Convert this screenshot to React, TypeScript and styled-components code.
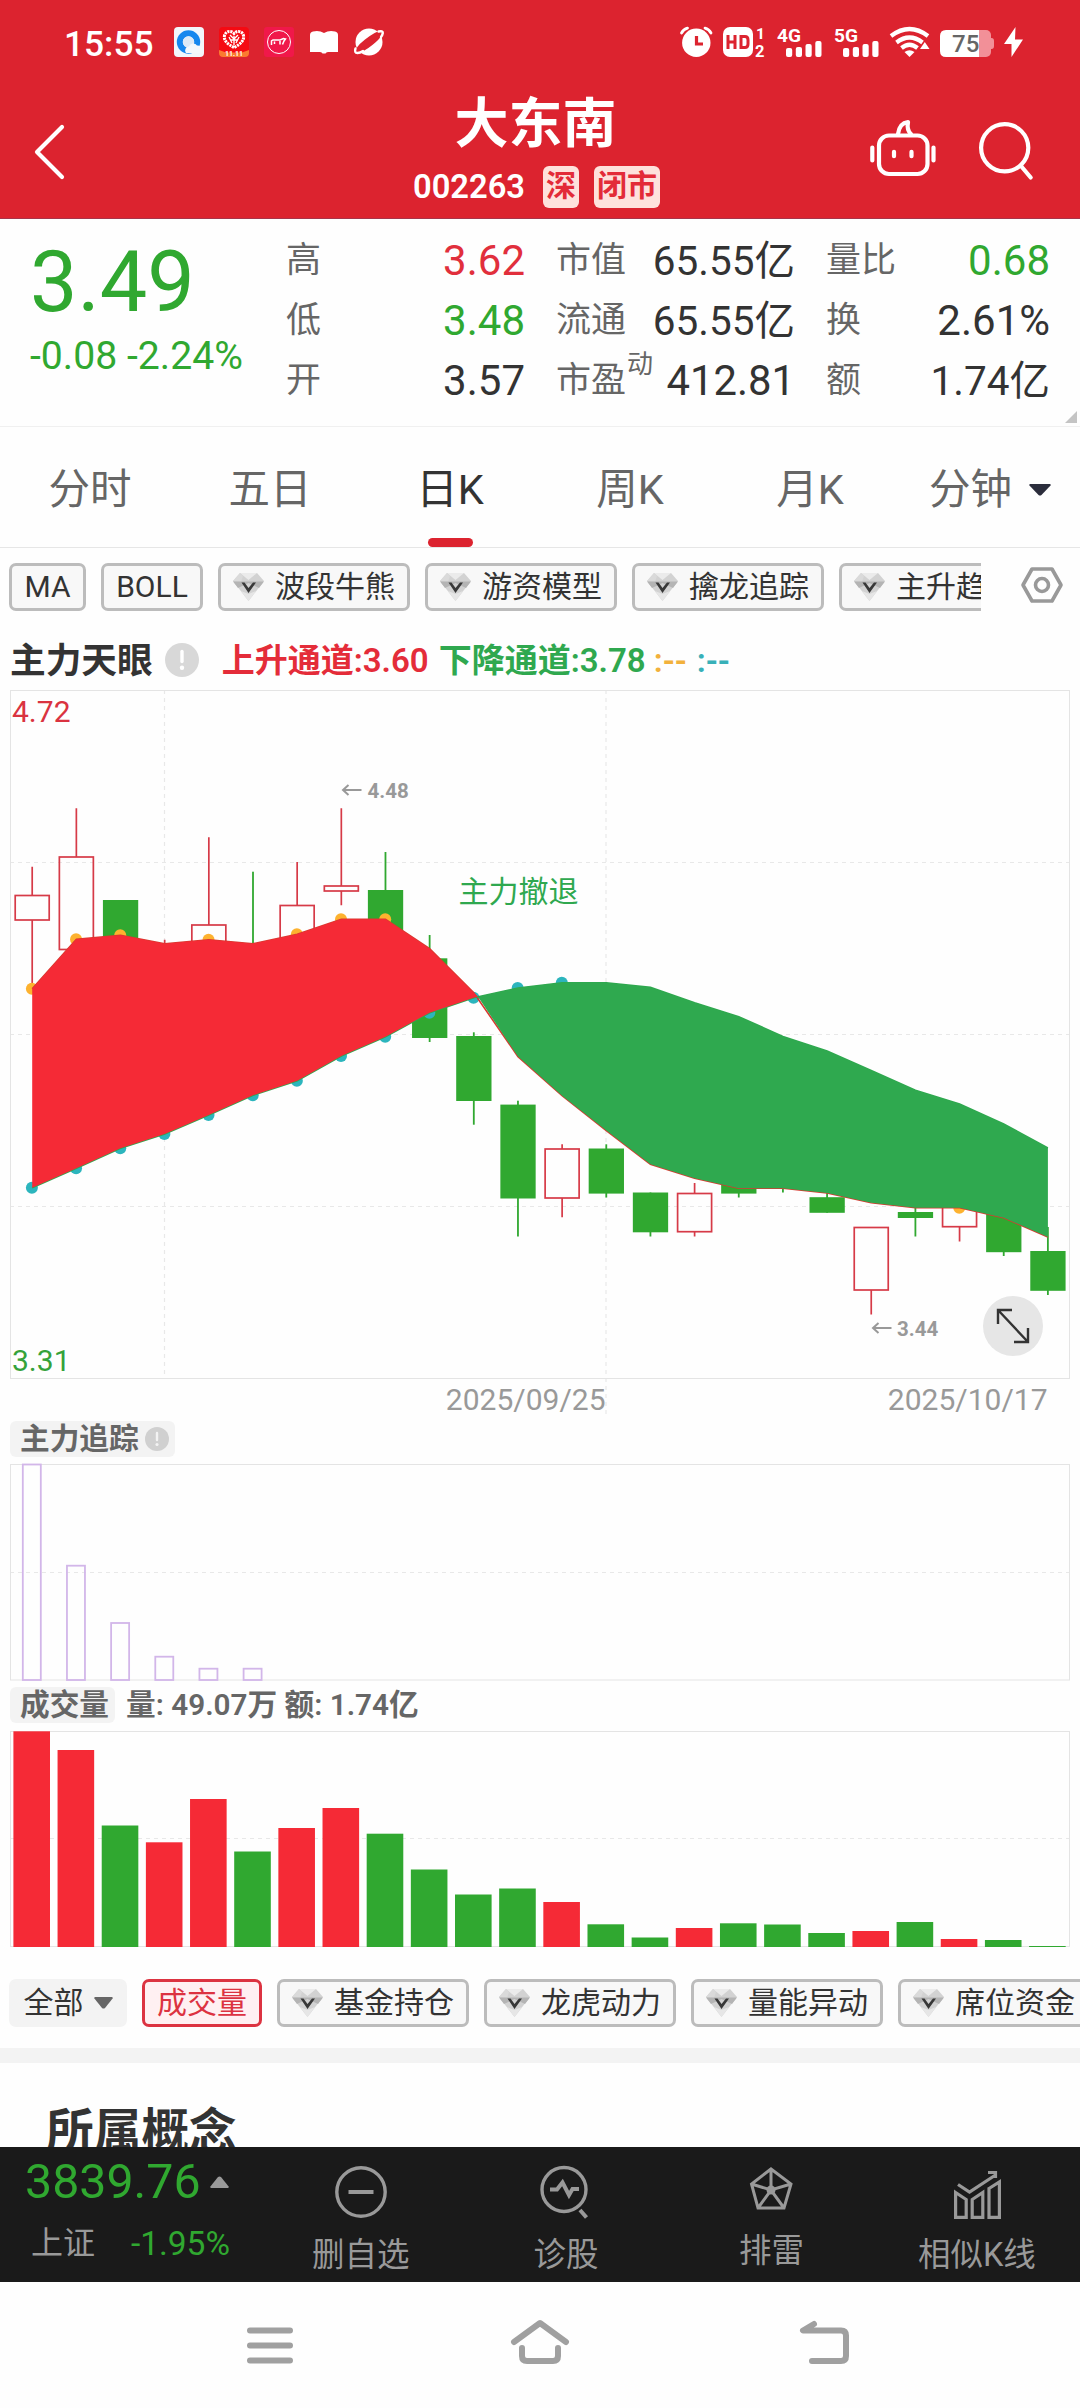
import React from "react";
import styled, { createGlobalStyle } from "styled-components";

const RED = "#dc232f";
const UP = "#f52a36";
const DOWN = "#30a830";
const FONT = `Roboto, "Noto Sans CJK SC", sans-serif`;

const Global = createGlobalStyle`
  * { box-sizing: border-box; }
  body { margin: 0; background: #fefefe; font-family: ${FONT}; color: #333; }
  svg { display: block; flex: none; overflow: visible; }
`;

const Screen = styled.div`
  width: 1080px;
  height: 2408px;
  overflow: hidden;
  display: flex;
  flex-direction: column;
  background: #fefefe;
`;

/* ---------- header ---------- */

const Header = styled.header`
  height: 219px;
  background: ${RED};
  color: #fff;
  border-bottom: 1px solid #a8344a;
  flex: none;
`;

const StatusBar = styled.div`
  display: flex;
  align-items: center;
  justify-content: space-between;
  height: 84px;
  padding: 0 57px 0 64px;
`;

const StatusGroup = styled.div<{ $gap: number }>`
  display: flex;
  align-items: center;
  gap: ${(p) => p.$gap}px;
`;

const SignalSvg = styled.svg`
  margin: 0 1px;
`;

const Clock = styled.span`
  font-size: 35.3px;
  font-weight: 500;
  line-height: 40px;
  width: 95px;
  padding-top: 3px;
`;

const TitleBar = styled.div`
  display: flex;
  height: 134px;
`;

const BackSlot = styled.div`
  width: 300px;
  padding: 39px 0 0 33px;
`;

const TitleColumn = styled.div`
  width: 473px;
  display: flex;
  flex-direction: column;
  align-items: center;
`;

const StockName = styled.h1`
  margin: 0 2px 0 0;
  padding-top: 8px;
  height: 82px;
  font-size: 54px;
  line-height: 66px;
  font-weight: 600;
`;

const CodeRow = styled.div`
  display: flex;
  align-items: center;
  height: 42px;
`;

const Code = styled.span`
  font-size: 32.7px;
  font-weight: 600;
  line-height: 42px;
  margin-right: 18px;
`;

const MarketTag = styled.span`
  height: 42px;
  padding: 0 3px;
  margin-right: 15px;
  border-radius: 6px;
  background: #fee1dc;
  color: #e32b38;
  font-size: 30px;
  line-height: 40px;
  font-weight: 600;
  &:last-child { margin-right: 0; }
`;

const TitleActions = styled.div`
  display: flex;
  gap: 40px;
  padding: 34px 0 0 95px;
`;

/* ---------- quote ---------- */

const Quote = styled.section`
  position: relative;
  display: flex;
  height: 208px;
  border-bottom: 1px solid #f0f0f0;
  flex: none;
`;

const PriceBlock = styled.div`
  width: 286px;
  padding: 17px 0 0 30px;
  color: ${DOWN};
`;

const Price = styled.div`
  font-size: 84.5px;
  line-height: 94px;
`;

const Change = styled.div`
  font-size: 39.2px;
  line-height: 52px;
  white-space: nowrap;
`;

const StatColumn = styled.dl<{ $width: number; $after: number }>`
  margin: 0 ${(p) => p.$after}px 0 0;
  padding-top: 12px;
  width: ${(p) => p.$width}px;
`;

const Stat = styled.div`
  display: flex;
  justify-content: space-between;
  height: 60px;
  line-height: 60px;
`;

const StatLabel = styled.dt`
  position: relative;
  font-size: 35px;
  color: #666;
  white-space: nowrap;
`;

const LabelMark = styled.sup`
  position: absolute;
  left: 71px;
  top: -17px;
  font-size: 26px;
`;

const StatValue = styled.dd<{ $color?: string; $size?: number }>`
  margin: 0;
  font-size: ${(p) => p.$size || 42}px;
  white-space: nowrap;
  color: ${(p) => p.$color || "#333"};
`;

const Corner = styled.i`
  position: absolute;
  right: 3px;
  bottom: 3px;
  border-left: 12px solid transparent;
  border-bottom: 12px solid #c4c4c4;
`;

/* ---------- period tabs ---------- */

const Tabs = styled.nav`
  display: grid;
  grid-template-columns: repeat(6, 180px);
  height: 121px;
  border-bottom: 1px solid #e6e6e6;
  flex: none;
`;

const Tab = styled.div<{ $active?: boolean }>`
  display: flex;
  flex-direction: column;
  justify-content: space-between;
  align-items: center;
  padding-top: 33px;
  font-size: 41.5px;
  line-height: 60px;
  color: ${(p) => (p.$active ? "#333" : "#666")};
  &::after {
    content: "";
    width: 45px;
    height: 9px;
    border-radius: 5px;
    background: ${(p) => (p.$active ? RED : "transparent")};
  }
`;

const TabLabel = styled.span`
  display: flex;
  align-items: center;
  gap: 17px;
`;

/* ---------- indicator chips ---------- */

const ChipRow = styled.div<{ $top: number }>`
  display: flex;
  align-items: center;
  margin-top: ${(p) => p.$top}px;
  height: 48px;
  flex: none;
`;

const ChipScroller = styled.div<{ $width: number }>`
  display: flex;
  gap: 15px;
  width: ${(p) => p.$width}px;
  padding-left: 9px;
  overflow: hidden;
  flex: none;
`;

const Chip = styled.div<{ $w: number; $tone?: "active" | "plain" }>`
  display: flex;
  align-items: center;
  justify-content: center;
  gap: ${(p) => (p.$tone === "plain" ? 10 : 11)}px;
  flex: none;
  width: ${(p) => p.$w}px;
  height: 48px;
  border: 3px solid ${(p) => (p.$tone === "active" ? "#dc3341" : p.$tone === "plain" ? "#f3f3f3" : "#bcbcbc")};
  border-radius: 7px;
  background: ${(p) => (p.$tone === "active" ? "#fff0f2" : p.$tone === "plain" ? "#f3f3f3" : "#f8f8f8")};
  color: ${(p) => (p.$tone === "active" ? "#dc3341" : "#333")};
  font-size: 30px;
  line-height: 42px;
  white-space: nowrap;
`;

const SettingsSlot = styled.div`
  padding-left: 40px;
`;

/* ---------- charts ---------- */

const ChartTitle = styled.div`
  display: flex;
  align-items: center;
  height: 79px;
  padding: 19px 0 0 10px;
  font-weight: 600;
  font-size: 33px;
  line-height: 60px;
  white-space: pre;
  flex: none;
`;

const ChartName = styled.span`
  padding-top: 1px;
  font-size: 35.7px;
  margin-right: 12px;
`;

const Legend = styled.span<{ $color: string; $w?: number }>`
  color: ${(p) => p.$color};
  width: ${(p) => (p.$w ? p.$w + "px" : "auto")};
`;

const LegendGroup = styled.div`
  display: flex;
  margin-left: 23px;
  padding-top: 2px;
`;

const MainChart = styled.div`
  position: relative;
  height: 731px;
  flex: none;
`;

const ExpandButton = styled.div`
  position: absolute;
  left: 983px;
  top: 606px;
  width: 60px;
  height: 60px;
  border-radius: 50%;
  background: #e6e6e6;
  display: flex;
  align-items: center;
  justify-content: center;
`;

const TagRow = styled.div`
  display: flex;
  align-items: center;
  height: 36px;
  padding-left: 10px;
  color: #666;
  font-size: 29.7px;
  line-height: 36px;
  font-weight: 600;
  flex: none;
`;

const Tag = styled.span`
  display: flex;
  align-items: center;
  gap: 6px;
  height: 36px;
  padding: 0 6px 0 10px;
  border-radius: 6px;
  background: #f3f3f3;
`;

const TagDetail = styled.span`
  margin-left: 11px;
`;

/* ---------- lower page ---------- */

const Divider = styled.div`
  height: 15px;
  margin-top: 21px;
  background: #f3f3f3;
  flex: none;
`;

const Concepts = styled.section`
  height: 84px;
  padding: 32px 0 0 46px;
  overflow: hidden;
  flex: none;
`;

const ConceptsTitle = styled.h2`
  margin: 0;
  font-size: 47.7px;
  line-height: 74px;
  font-weight: 600;
`;

const ActionBar = styled.footer`
  display: flex;
  height: 135px;
  background: #1a1a1a;
  color: #999;
  flex: none;
`;

const IndexBlock = styled.div`
  width: 258px;
  padding: 5px 0 0 25px;
`;

const IndexValue = styled.div`
  display: flex;
  align-items: center;
  gap: 9px;
  font-size: 48.3px;
  line-height: 60px;
  color: ${DOWN};
`;

const IndexRow = styled.div`
  display: flex;
  justify-content: space-between;
  padding: 0 28px 0 6px;
  font-size: 32px;
  line-height: 63px;
`;

const IndexChange = styled.span`
  font-size: 33.5px;
  line-height: 64px;
  color: ${DOWN};
`;

const Action = styled.div<{ $lift?: number }>`
  display: flex;
  flex-direction: column;
  align-items: center;
  width: 205.4px;
  font-size: 32.5px;
  line-height: 48px;
  padding-top: 17px;
  svg { margin-bottom: ${(p) => 12.5 - (p.$lift || 0)}px; }
`;

const SystemNav = styled.div`
  display: flex;
  align-items: center;
  height: 126px;
  padding: 0 0 7px 244px;
  gap: 215px;
  svg:last-child { margin-left: 14px; }
`;

/* ---------- icons ---------- */

const Gem = () => (
  <svg width="31" height="28" viewBox="0 0 31 28">
    <path d="M7 0H24L31 8L15.500 28L0 8Z" fill="#d2d2d2" />
    <path d="M7 0H24L15.500 7Z" fill="#ebebeb" />
    <path d="M7 0L0 8L8 9L10 3Z" fill="#dadada" />
    <path d="M0 8.500L31 8.500L26 15L15.500 10L5 15Z" fill="#b4b4b4" />
    <path d="M8 18L15.500 28L23 18L15.500 21Z" fill="#e6e6e6" />
    <path d="M8.500 9.500H11.500L15.500 15L20 9.500H23L15.500 20Z" fill="#383838" />
  </svg>
);

const Info = ({ size, fill, mark }: { size: number; fill: string; mark: string }) => (
  <svg width={size} height={size} viewBox="0 0 34 34">
    <circle cx="17" cy="17" r="17" fill={fill} />
    <path d="M17 8.500V18.500" stroke={mark} strokeWidth="3.400" strokeLinecap="round" />
    <circle cx="17" cy="24.700" r="2.200" fill={mark} />
  </svg>
);

const Bars = ({ label }: { label: string }) => (
  <SignalSvg width="45" height="30" viewBox="0 0 45 30">
    <text x="0" y="14.500" fontFamily="Roboto" fontWeight="700" fontSize="19" textLength="24" lengthAdjust="spacingAndGlyphs" fill="#fff">{label}</text>
    <rect x="9" y="21" width="6.200" height="9" rx="2" fill="#fff" />
    <rect x="18.800" y="20" width="6.200" height="10" rx="2" fill="#fff" />
    <rect x="28.500" y="17" width="6.200" height="13" rx="2" fill="#fff" />
    <rect x="38.300" y="14" width="6.200" height="16" rx="2" fill="#fff" />
  </SignalSvg>
);

const BrowserIcon = () => (
  <svg width="30" height="30" viewBox="0 0 30 30">
    <rect width="30" height="30" rx="4" fill="#f2f6fb" />
    <circle cx="14.500" cy="15" r="8.700" fill="none" stroke="#1687ee" strokeWidth="6" />
    <circle cx="14.500" cy="15" r="5.700" fill="#dde9f6" />
    <path d="M12 26a4 4 0 0 1 3-6.500a4.500 4.500 0 0 1 8 -1a4.500 4.500 0 0 1 4 7.500Z" fill="#f4f8fc" />
  </svg>
);

const FestivalIcon = () => (
  <svg width="30" height="30" viewBox="0 0 30 30">
    <rect width="30" height="30" rx="4" fill="#f50a12" />
    <path d="M0 23L7 25.500H23L30 23V26a4 4 0 0 1-4 4H4a4 4 0 0 1-4-4Z" fill="#fb7a30" />
    <path d="M15 20.500C8 17 4.500 13 5.500 8.500C7 3.500 12.500 3.500 15 6.500C17.500 3.500 23 3.500 24.500 8.500C25.500 13 22 17 15 20.500Z" fill="none" stroke="#fff" strokeWidth="3" strokeDasharray="2.200 0.800" />
    <path d="M11 8L15 12L19 8M11 13H19M15 9V18M10 10L13 16M20 10L17 16" fill="none" stroke="#fff" strokeWidth="1.300" />
    <text x="15" y="28.500" textAnchor="middle" fontFamily="Roboto" fontSize="7" fontWeight="700" fill="#fff">11.11</text>
  </svg>
);

const HorseIcon = () => (
  <svg width="30" height="30" viewBox="0 0 30 30">
    <rect width="30" height="30" rx="3" fill="#f0184a" />
    <circle cx="15" cy="15" r="11.500" fill="none" stroke="#fff" strokeWidth="1" />
    <path d="M7.500 18V14L9 13H16L19.500 11.500L21.500 12L20 14L18.500 17.500M10.500 17V14.500M16 14V17.500" fill="none" stroke="#fff" strokeWidth="1.500" />
  </svg>
);

const BookIcon = () => (
  <svg width="30" height="30" viewBox="0 0 30 30">
    <path d="M1 8Q1 5 4 4.500Q10 3 15 6Q20 3 26 4.500Q29 5 29 8V25H19Q17 25 16.500 26.500H13.500Q13 25 11 25H1Z" fill="#fff" />
  </svg>
);

const PlanetIcon = () => (
  <svg width="30" height="30" viewBox="0 0 30 30">
    <circle cx="15" cy="15" r="13.500" fill="#fff" />
    <path d="M27.500 3.500Q31 8 19 17.500Q8 26.500 2 26Q0 21 11 12.500Q22 4 27.500 3.500Z" fill={RED} />
    <path d="M24.500 4.500Q29 3.500 28.800 6Q28.500 8 27 10M1.500 21.500Q0 26 3.500 26Q6 26 9 24" fill="none" stroke="#fff" strokeWidth="2.400" strokeLinecap="round" />
  </svg>
);

const AlarmIcon = () => (
  <svg width="33" height="30" viewBox="0 0 33 30">
    <circle cx="16.300" cy="15.700" r="14.200" fill="#fff" />
    <path d="M1.500 6Q3.500 2.200 7.500 1.200M31 6Q29 2.200 25 1.200" stroke="#fff" strokeWidth="2.800" fill="none" strokeLinecap="round" />
    <path d="M16.500 9V17H23" fill="none" stroke={RED} strokeWidth="3.200" />
  </svg>
);

const HdIcon = () => (
  <svg width="43" height="30" viewBox="0 0 43 30">
    <rect width="30" height="30" rx="7" fill="#fff" />
    <path d="M5 8V22M12 8V22M5 15H12M18 9.500V20.500H22Q25 20.500 25 17V13Q25 9.500 22 9.500Z" fill="none" stroke={RED} strokeWidth="3" />
    <text x="33" y="11.500" fontFamily="Roboto" fontSize="15.500" fontWeight="700" fill="#fff">1</text>
    <text x="32" y="29.500" fontFamily="Roboto" fontSize="16.500" fontWeight="700" fill="#fff">2</text>
  </svg>
);

const WifiIcon = () => (
  <svg width="40" height="30" viewBox="0 0 40 30">
    <g fill="none" stroke="#fff" strokeWidth="4.200">
      <path d="M1 9Q19.500 -5 38 9" />
      <path d="M6.500 15.500Q19.500 5.500 32.500 15.500" />
      <path d="M11.500 21Q19.500 14.500 27.500 21" />
    </g>
    <path d="M14.500 25Q19.500 21.500 24.500 25L19.500 30Z" fill="#fff" />
    <path d="M30 22L34.800 15L39.500 22Z" fill="#fff" />
  </svg>
);

const BatteryIcon = () => (
  <svg width="54" height="30" viewBox="0 0 54 30">
    <rect x="30" y="3" width="21" height="27" rx="5" fill="#f29098" />
    <path d="M50 11H51.500Q54 11 54 14V19Q54 22 51.500 22H50Z" fill="#f29098" />
    <path d="M6 3H39V30H6Q0 30 0 24V9Q0 3 6 3Z" fill="#fff" />
    <text x="12" y="25" fontFamily="Roboto" fontSize="24" fontWeight="500" fill="#666">75</text>
  </svg>
);

const BoltIcon = () => (
  <svg width="19" height="30" viewBox="0 0 19 30">
    <path d="M11.500 0L0 17H7.500L7.500 30L19 12.500H11Z" fill="#fff" />
  </svg>
);

const RobotIcon = () => (
  <svg width="68" height="62" viewBox="868 118 68 62">
    <g fill="none" stroke="#fff" strokeWidth="4.200" strokeLinecap="round" strokeLinejoin="round">
      <rect x="879" y="135.500" width="48.500" height="38.500" rx="10" />
      <path d="M898 134Q899.500 123 908 122Q906.500 130 911 134" />
      <path d="M872.300 147.500V160.500M933.500 147.500V160.500" />
      <path d="M894 151.800V156.200M911.500 151.800V156.200" />
    </g>
  </svg>
);

const SearchIcon = () => (
  <svg width="60" height="62" viewBox="978 118 60 62">
    <g fill="none" stroke="#fff" strokeWidth="4.200" strokeLinecap="round">
      <circle cx="1006.700" cy="147.800" r="23.600" />
      <path d="M1023 166L1032.700 177.500" />
    </g>
  </svg>
);

/* ---------- chart data ---------- */

const STEP = 44.16;
const cx = (i: number) => 32.2 + STEP * i;

type Candle = [up: boolean, high: number, top: number, bottom: number, low: number];
const candles: Candle[] = [
  [true, 866.700, 895.500, 920, 984],
  [true, 808.300, 857, 949.500, 960],
  [false, 900, 900, 945, 950],
  [true, 939.700, 950, 960, 970],
  [true, 837.300, 925, 960, 970],
  [false, 871.700, 950, 970, 975],
  [true, 862, 905.500, 950, 970],
  [true, 808.300, 886, 891, 905.300],
  [false, 852, 890, 960, 970],
  [false, 935, 958.300, 1038, 1042],
  [false, 1032.300, 1036, 1101, 1124.700],
  [false, 1100.700, 1104.600, 1198.500, 1236.500],
  [true, 1144.300, 1149, 1198, 1217.300],
  [false, 1144.300, 1148.500, 1193.600, 1197.500],
  [false, 1192.500, 1192.500, 1232.300, 1236.500],
  [true, 1183, 1193.500, 1231.700, 1236.500],
  [false, 1175, 1184, 1193.600, 1197.500],
  [false, 1170, 1175, 1184, 1192.500],
  [false, 1185, 1197.200, 1212.800, 1212.800],
  [true, 1227, 1227.500, 1290, 1314.600],
  [false, 1200, 1212, 1218, 1236.500],
  [true, 1190, 1200, 1226.700, 1241.500],
  [false, 1200, 1205, 1252.200, 1256],
  [false, 1227, 1251, 1290.800, 1295],
];

const lineA = [988.7, 939.3, 935.3, 943.7, 939.7, 943.7, 934.3, 919.3, 919.3, 948.7, 992.7, 1056.6, 1095.7, 1130.5, 1164.2, 1178.3, 1188.3, 1188.3, 1192.9, 1202.8, 1207.8, 1207.8, 1217.7, 1236.9];
const lineB = [1187.7, 1168.3, 1148.3, 1134, 1115, 1095.3, 1080.7, 1056, 1036.7, 1012.7, 997.7, 988, 982.8, 982.8, 987.4, 1002.7, 1016.8, 1036.4, 1050.9, 1070.4, 1090.3, 1104.1, 1124, 1148];
const orangeDots = [0, 1, 2, 4, 6, 7, 8, 21];
const tealDots = [0, 1, 2, 3, 4, 5, 6, 7, 8, 9, 10, 11, 12];

const CROSS = "478,996.800";
const pt = (line: number[]) => (i: number) => `${cx(i).toFixed(1)},${line[i]}`;
const range = (a: number, b: number) => Array.from({ length: b - a + 1 }, (_, k) => a + k);
const redArea = [...range(0, 10).map(pt(lineA)), CROSS, ...range(0, 10).reverse().map(pt(lineB))].join(" ");
const greenArea = [CROSS, ...range(11, 23).map(pt(lineB)), ...range(11, 23).reverse().map(pt(lineA))].join(" ");

const volumes: [boolean, number][] = [
  [true, 1731.300], [true, 1750], [false, 1825.500], [true, 1842.300], [true, 1799], [false, 1851.500],
  [true, 1828], [true, 1808], [false, 1833.700], [false, 1869.500], [false, 1894.500], [false, 1888.500],
  [true, 1902], [false, 1924.300], [false, 1937.500], [true, 1928], [false, 1923.300], [false, 1924.500],
  [false, 1933], [true, 1931], [false, 1922], [true, 1939], [false, 1940], [false, 1946],
];

const flow = [1464.5, 1565.7, 1623, 1656.7, 1668.7, 1668.7];

const PriceChart = () => (
  <svg width="1080" height="731" viewBox="0 690 1080 731" fontFamily={FONT}>
    <g stroke="#e8e8e8" strokeWidth="1.200" strokeDasharray="4 4" fill="none">
      <path d="M10 862.500H1070M10 1034.500H1070M10 1206.500H1070" />
      <path d="M164.500 690V1378M606 690V1414" />
    </g>
    <rect x="10.500" y="690.500" width="1059" height="688" fill="none" stroke="#e4e4e4" />
    {candles.map(([up, high, top, bottom, low], i) => {
      const x = cx(i);
      return up ? (
        <g key={i} stroke="#d63a47" strokeWidth="1.700" fill="none">
          <path d={`M${x} ${high}V${top}M${x} ${bottom}V${low}`} />
          <rect x={x - 17} y={top} width="34" height={bottom - top} />
        </g>
      ) : (
        <g key={i} fill={DOWN}>
          <rect x={x - 0.9} y={high} width="1.800" height={low - high} />
          <rect x={x - 17.6} y={top} width="35.300" height={bottom - top} />
        </g>
      );
    })}
    {orangeDots.map((i) => <circle key={i} cx={cx(i) - 0.3} cy={lineA[i]} r="6" fill="#fdb22f" />)}
    {tealDots.map((i) => <circle key={i} cx={cx(i) - 0.3} cy={lineB[i]} r="6" fill="#2cb5bd" />)}
    <polyline points={range(0, 23).map(pt(lineA)).join(" ")} fill="none" stroke="#d8392f" strokeWidth="1.600" />
    <polyline points={range(0, 23).map(pt(lineB)).join(" ")} fill="none" stroke="#2fa84f" strokeWidth="1.600" />
    <polygon points={redArea} fill={UP} />
    <polygon points={greenArea} fill="#2fa94f" />
    <text x="12" y="722" fontSize="30" fill="#da3340">4.72</text>
    <text x="12" y="1371.300" fontSize="30" fill="#35a23a">3.31</text>
    <g stroke="#999" strokeWidth="2" fill="none">
      <path d="M361.500 790H343M348.500 785L343 790L348.500 795" />
      <path d="M891.500 1328H873M878.500 1323L873 1328L878.500 1333" />
    </g>
    <g fontSize="20.500" fontWeight="700" fill="#999">
      <text x="367.500" y="798">4.48</text>
      <text x="897" y="1336">3.44</text>
    </g>
    <text x="458.500" y="902" fontSize="30" fill="#2fa84f">主力撤退</text>
    <g fontSize="30" fill="#999" textAnchor="end">
      <text x="605.500" y="1410">2025/09/25</text>
      <text x="1047.500" y="1410">2025/10/17</text>
    </g>
  </svg>
);

const FlowChart = () => (
  <svg width="1080" height="230" viewBox="0 1457 1080 230">
    <path d="M10 1572.500H1070" stroke="#e8e8e8" strokeWidth="1.200" strokeDasharray="4 4" />
    <rect x="10.500" y="1464.500" width="1059" height="215.500" fill="none" stroke="#e4e4e4" />
    {flow.map((y, i) => (
      <rect key={i} x={cx(i) - 9.4} y={y} width="18" height={1680 - y} fill="none" stroke="#d2b6e9" strokeWidth="1.800" />
    ))}
  </svg>
);

const VolumeChart = () => (
  <svg width="1080" height="256" viewBox="0 1723 1080 256">
    <path d="M10 1838.500H1070" stroke="#e8e8e8" strokeWidth="1.200" strokeDasharray="4 4" />
    <rect x="10.500" y="1731.500" width="1059" height="215" fill="none" stroke="#e4e4e4" />
    {volumes.map(([up, y], i) => (
      <rect key={i} x={cx(i) - 18.8} y={y} width="36.600" height={1947 - y} fill={up ? UP : DOWN} />
    ))}
  </svg>
);

const GemChip = ({ label }: { label: string }) => (
  <Chip $w={192}><Gem />{label}</Chip>
);

type Row = { label: string; value: string; color?: string; mark?: string; size?: number };
const stats: { width: number; after: number; rows: Row[] }[] = [
  { width: 239, after: 31, rows: [{ label: "高", value: "3.62", color: "#e12f3c" }, { label: "低", value: "3.48", color: DOWN }, { label: "开", value: "3.57" }] },
  { width: 239, after: 31, rows: [{ label: "市值", value: "65.55亿", size: 40.5 }, { label: "流通", value: "65.55亿", size: 40.5 }, { label: "市盈", value: "412.81", mark: "动", size: 41.8 }] },
  { width: 224, after: 0, rows: [{ label: "量比", value: "0.68", color: DOWN }, { label: "换", value: "2.61%" }, { label: "额", value: "1.74亿", size: 40.5 }] },
];

export default function App() {
  return (
    <Screen>
      <Global />
      <Header>
        <StatusBar>
          <StatusGroup $gap={15}>
            <Clock>15:55</Clock>
            <BrowserIcon /><FestivalIcon /><HorseIcon /><BookIcon /><PlanetIcon />
          </StatusGroup>
          <StatusGroup $gap={10}>
            <AlarmIcon /><HdIcon /><Bars label="4G" /><Bars label="5G" /><WifiIcon /><BatteryIcon /><BoltIcon />
          </StatusGroup>
        </StatusBar>
        <TitleBar>
          <BackSlot>
            <svg width="34" height="58" viewBox="0 0 34 58">
              <path d="M29 4L4 29L29 54" fill="none" stroke="#fff" strokeWidth="4.200" strokeLinecap="round" strokeLinejoin="round" />
            </svg>
          </BackSlot>
          <TitleColumn>
            <StockName>大东南</StockName>
            <CodeRow>
              <Code>002263</Code>
              <MarketTag>深</MarketTag>
              <MarketTag>闭市</MarketTag>
            </CodeRow>
          </TitleColumn>
          <TitleActions><RobotIcon /><SearchIcon /></TitleActions>
        </TitleBar>
      </Header>

      <Quote>
        <PriceBlock>
          <Price>3.49</Price>
          <Change>-0.08 -2.24%</Change>
        </PriceBlock>
        {stats.map((col, i) => (
          <StatColumn key={i} $width={col.width} $after={col.after}>
            {col.rows.map((r) => (
              <Stat key={r.label}>
                <StatLabel>{r.label}{r.mark && <LabelMark>{r.mark}</LabelMark>}</StatLabel>
                <StatValue $color={r.color} $size={r.size}>{r.value}</StatValue>
              </Stat>
            ))}
          </StatColumn>
        ))}
        <Corner />
      </Quote>

      <Tabs>
        <Tab>分时</Tab>
        <Tab>五日</Tab>
        <Tab $active>日K</Tab>
        <Tab>周K</Tab>
        <Tab>月K</Tab>
        <Tab>
          <TabLabel>
            分钟
            <svg width="22" height="12" viewBox="0 0 22 12"><path d="M1 0H21L22 1L12.500 11Q11 12 9.500 11L0 1Z" fill="#2b2d3c" /></svg>
          </TabLabel>
        </Tab>
      </Tabs>

      <ChipRow $top={15}>
        <ChipScroller $width={981}>
          <Chip $w={77}>MA</Chip>
          <Chip $w={102}>BOLL</Chip>
          <GemChip label="波段牛熊" />
          <GemChip label="游资模型" />
          <GemChip label="擒龙追踪" />
          <GemChip label="主升趋势" />
        </ChipScroller>
        <SettingsSlot>
          <svg width="42" height="36" viewBox="0 0 42 36">
            <path d="M11 2H31L40 18L31 34H11L2 18Z" fill="none" stroke="#999" strokeWidth="3.600" strokeLinejoin="round" transform="translate(0 -2)" />
            <circle cx="21" cy="16" r="6.500" fill="none" stroke="#999" strokeWidth="3.600" />
          </svg>
        </SettingsSlot>
      </ChipRow>

      <ChartTitle>
        <ChartName>主力天眼</ChartName>
        <Info size={34} fill="#d8d8d8" mark="#fff" />
        <LegendGroup>
          <Legend $color="#e42c39" $w={217}>上升通道:3.60</Legend>
          <Legend $color="#2fa84f" $w={215}>下降通道:3.78</Legend>
          <Legend $color="#f2b13c" $w={43}>:--</Legend>
          <Legend $color="#38b0b8">:--</Legend>
        </LegendGroup>
      </ChartTitle>

      <MainChart>
        <PriceChart />
        <ExpandButton>
          <svg width="34" height="36" viewBox="0 0 34 36" fill="none" stroke="#333" strokeWidth="2.400">
            <path d="M2 2L32 34M2 16V2H16M32 20V34H18" />
          </svg>
        </ExpandButton>
      </MainChart>

      <TagRow>
        <Tag>主力追踪<Info size={24} fill="#d0d0d0" mark="#f3f3f3" /></Tag>
      </TagRow>
      <FlowChart />
      <TagRow>
        <Tag>成交量</Tag>
        <TagDetail>量: 49.07万 额: 1.74亿</TagDetail>
      </TagRow>
      <VolumeChart />

      <ChipRow $top={0}>
        <ChipScroller $width={1080}>
          <Chip $w={118} $tone="plain">
            全部
            <svg width="19" height="12" viewBox="0 0 19 12"><path d="M1 0H18L19 1L11 11Q9.500 12 8 11L0 1Z" fill="#666" /></svg>
          </Chip>
          <Chip $w={120} $tone="active">成交量</Chip>
          <GemChip label="基金持仓" />
          <GemChip label="龙虎动力" />
          <GemChip label="量能异动" />
          <GemChip label="席位资金" />
        </ChipScroller>
      </ChipRow>
      <Divider />
      <Concepts><ConceptsTitle>所属概念</ConceptsTitle></Concepts>

      <ActionBar>
        <IndexBlock>
          <IndexValue>
            3839.76
            <svg width="19" height="12" viewBox="0 0 19 12"><path d="M1 12H18L19 11L11 1Q9.500 0 8 1L0 11Z" fill="#999" /></svg>
          </IndexValue>
          <IndexRow>上证<IndexChange>-1.95%</IndexChange></IndexRow>
        </IndexBlock>
        <Action>
          <svg width="54" height="54" viewBox="0 0 54 54" fill="none" stroke="#999">
            <circle cx="27" cy="28" r="24.200" strokeWidth="3.400" />
            <path d="M14.500 28H39.500" strokeWidth="4" />
          </svg>
          删自选
        </Action>
        <Action>
          <svg width="54" height="54" viewBox="0 0 54 54" fill="none" stroke="#999" strokeWidth="3.400">
            <circle cx="25" cy="25.500" r="22" />
            <path d="M11 25.500H18L23.500 18.500L30 31L33.500 25H40" strokeWidth="4" />
            <path d="M41 46L47.500 53.500" strokeWidth="4" />
          </svg>
          诊股
        </Action>
        <Action $lift={4}>
          <svg width="54" height="54" viewBox="0 0 54 54" fill="none" stroke="#999" strokeWidth="3">
            <path d="M27 5L47 20L40 44H14L7.500 20ZM27 5V26M47 20L27 26L7.500 20M14 44L27 26L40 44" />
            <circle cx="27" cy="26" r="3" fill="#999" />
          </svg>
          排雷
        </Action>
        <Action>
          <svg width="54" height="54" viewBox="0 0 54 54" fill="none" stroke="#999" strokeWidth="3.200">
            <path d="M5.600 28.500L16.200 35.500V53.400H5.600ZM22.200 35.500L32.800 28.500V53.400H22.200ZM39 24.500L49.400 18V53.400H39Z" />
            <path d="M8 20.500L19.500 28L45.500 11M38 8.500H45.500V14" />
          </svg>
          相似K线
        </Action>
      </ActionBar>

      <SystemNav>
        <svg width="52" height="44" viewBox="0 0 52 44" stroke="#a0a0a0" strokeWidth="6" strokeLinecap="round">
          <path d="M6 10.500H46M6 25.500H46M6 40.500H46" />
        </svg>
        <svg width="58" height="44" viewBox="0 0 58 44" stroke="#a0a0a0" strokeWidth="6" fill="none" strokeLinecap="round" strokeLinejoin="round">
          <path d="M3 22L29 3L55 22M11 28V36Q11 41 16 41H42Q47 41 47 36V28" />
        </svg>
        <svg width="52" height="44" viewBox="0 0 52 44" stroke="#a0a0a0" strokeWidth="6" fill="none" strokeLinecap="round" strokeLinejoin="round">
          <path d="M16 4L5 10.500H43Q48 10.500 48 15.500V36Q48 41 43 41H14" />
        </svg>
      </SystemNav>
    </Screen>
  );
}
